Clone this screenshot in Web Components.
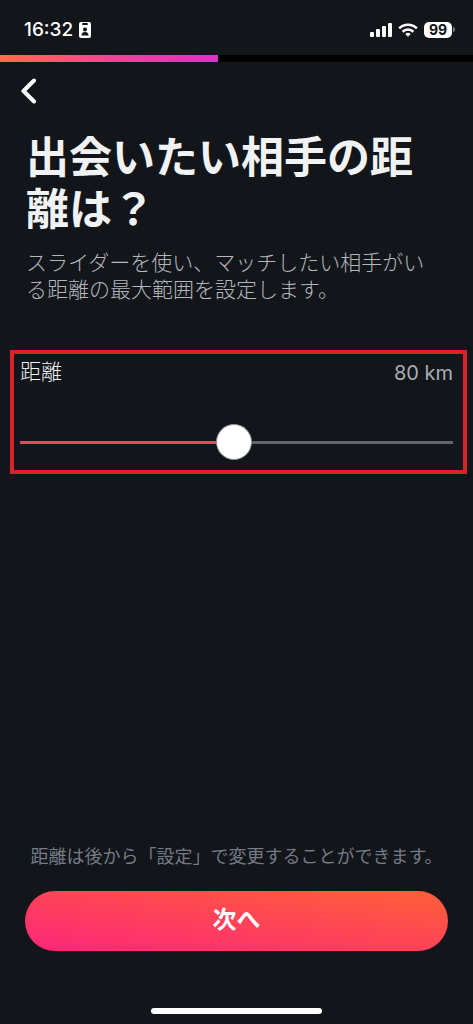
<!DOCTYPE html>
<html lang="ja">
<head>
<meta charset="utf-8">
<meta name="viewport" content="width=device-width, initial-scale=1">
<title>距離の設定</title>
<style>
  html, body { margin: 0; height: 100%; background: #12151a; }
  body { font-family: Inter, "Noto Sans CJK JP", sans-serif; color: #f0f2f4; }
</style>
</head>
<body>
<distance-screen></distance-screen>
<script>
const define = (name, html, setup) => {
  const template = document.createElement('template');
  template.innerHTML = html;
  customElements.define(name, class extends HTMLElement {
    constructor() {
      super();
      this.attachShadow({ mode: 'open' }).append(template.content.cloneNode(true));
    }
    connectedCallback() { if (setup) setup(this, this.shadowRoot); }
  });
};

define('status-bar', `
  <style>
    :host { display: flex; align-items: center; justify-content: space-between; height: 55px; padding: 4px 18px 0 24px; box-sizing: border-box; color: #fff; }
    div { display: flex; align-items: center; gap: 6px; }
    .time { font-size: 19px; line-height: 24px; font-weight: 500; }
    .battery { display: flex; align-items: center; gap: 1px; }
    .level { width: 28px; height: 16px; border-radius: 5px; background: #fff; color: #12151a; font-size: 14px; line-height: 16px; font-weight: 700; text-align: center; }
    .cap { width: 2px; height: 5px; border-radius: 0 2px 2px 0; background: #777a7e; }
    svg { display: block; }
  </style>
  <div>
    <span class="time">16:32</span>
    <svg width="12" height="16" viewBox="0 0 12 16" aria-hidden="true">
      <rect width="12" height="16" rx="2" fill="#fff"/>
      <rect x="3" y="1" width="6" height="2" rx="1" fill="#12151a"/>
      <circle cx="6" cy="7.5" r="2" fill="#12151a"/>
      <path d="M2.5 13.5c0-2.500 1.500-3.500 3.500-3.500s3.500 1 3.500 3.500z" fill="#12151a"/>
    </svg>
  </div>
  <div>
    <svg width="22" height="14" viewBox="0 0 22 14" fill="#fff" aria-hidden="true">
      <rect x="0" y="9" width="4" height="5" rx="1"/><rect x="6" y="6" width="4" height="8" rx="1"/>
      <rect x="12" y="3" width="4" height="11" rx="1"/><rect x="18" y="0" width="4" height="14" rx="1"/>
    </svg>
    <svg width="20" height="14" viewBox="0 0 20 14" fill="none" stroke="#fff" stroke-width="2.600" aria-hidden="true">
      <path d="M1.200 5.300a12.500 12.500 0 0 1 17.600 0"/><path d="M4.600 8.700a7.700 7.700 0 0 1 10.800 0"/>
      <path d="M10 13.800L7.300 11.100a3.900 3.900 0 0 1 5.400 0z" fill="#fff" stroke="none"/>
    </svg>
    <span class="battery"><span class="level">99</span><span class="cap"></span></span>
  </div>`);

define('step-progress', `
  <style>
    :host { display: block; height: 7px; background: #000; }
    .bar { height: 100%; background: linear-gradient(90deg, #fd6e48, #e8459a 55%, #d934c6); }
  </style>
  <div class="bar" role="progressbar" aria-label="進行状況"></div>`,
  (host, root) => {
    const bar = root.querySelector('.bar');
    bar.style.width = host.getAttribute('value') + '%';
    bar.setAttribute('aria-valuenow', host.getAttribute('value'));
  });

define('back-button', `
  <style>
    :host { display: block; padding: 16px 20px 0; }
    button { display: block; border: 0; padding: 0; background: none; cursor: pointer; }
    svg { display: block; }
  </style>
  <button type="button" aria-label="戻る">
    <svg width="18" height="26" viewBox="0 0 18 26" fill="none" stroke="#fff" stroke-width="4" stroke-linecap="round" stroke-linejoin="round"><path d="M14 2.500L3.500 13 14 23.500"/></svg>
  </button>`);

define('screen-heading', `
  <style>
    :host { display: block; padding: 24px 36px 0 26px; }
    h1 { margin: 0; font-size: 43px; line-height: 52px; font-weight: 700; font-family: "Noto Sans CJK JP", sans-serif; }
    p { margin: 16px 0 0; font-size: 21px; line-height: 27px; font-weight: 300; color: #b4b7bc; font-family: "Noto Sans CJK JP", sans-serif; }
  </style>
  <h1><slot name="title"></slot></h1>
  <p><slot></slot></p>`);

define('distance-slider', `
  <style>
    :host { display: block; margin: 48px 6px 0 10px; padding: 2px 10px 10px 6px; border: 4px solid #d9232a; }
    .row { display: flex; align-items: flex-start; justify-content: space-between; height: 32px; }
    label { font-size: 21px; line-height: 32px; font-weight: 300; }
    output { font-size: 20px; line-height: 34px; color: #a9adb3; }
    input { --fill: 49%; display: block; appearance: none; width: 100%; height: 36px; margin: 36px 0 0; background: none; cursor: pointer; }
    input::-webkit-slider-runnable-track { height: 3px; background: linear-gradient(90deg, #e3495a var(--fill), #5f646c var(--fill)); }
    input::-webkit-slider-thumb { appearance: none; width: 36px; height: 36px; margin-top: -17px; box-sizing: border-box; border: 1px solid #8b9098; border-radius: 50%; background: #fff; }
  </style>
  <div class="row"><label for="range">距離</label><output for="range">80 km</output></div>
  <input id="range" type="range" min="2" max="160" value="80">`,
  (host, root) => {
    const input = root.querySelector('input');
    input.addEventListener('input', () => {
      root.querySelector('output').value = input.value + ' km';
      input.style.setProperty('--fill', (input.value - input.min) / (input.max - input.min) * 100 + '%');
    });
  });

define('next-action', `
  <style>
    :host { display: block; margin-top: auto; padding: 0 25px; }
    p { margin: 0 0 23px; font-size: 18px; line-height: 26px; color: #757b86; text-align: center; font-family: "Noto Sans CJK JP", sans-serif; }
    button { display: block; width: 100%; height: 60px; padding: 0 0 6px; border: 0; border-radius: 30px; background: linear-gradient(to top right, #fd267a, #ff6036); color: #fff; font: 700 24px/32px "Noto Sans CJK JP", sans-serif; cursor: pointer; }
  </style>
  <p><slot name="note"></slot></p>
  <button type="button"><slot></slot></button>`);

define('home-indicator', `
  <style>
    :host { display: flex; justify-content: center; padding: 57px 0 10px; }
    span { width: 36%; height: 6px; border-radius: 3px; background: #fff; }
  </style>
  <span></span>`);

define('distance-screen', `
  <style>
    :host { display: flex; flex-direction: column; min-height: 100vh; background: #12151a; }
  </style>
  <status-bar></status-bar>
  <step-progress value="46"></step-progress>
  <back-button></back-button>
  <screen-heading><span slot="title">出会いたい相手の距離は？</span>スライダーを使い、マッチしたい相手がいる距離の最大範囲を設定します。</screen-heading>
  <distance-slider></distance-slider>
  <next-action><span slot="note">距離は後から「設定」で変更することができます。</span>次へ</next-action>
  <home-indicator></home-indicator>`);
</script>
</body>
</html>
